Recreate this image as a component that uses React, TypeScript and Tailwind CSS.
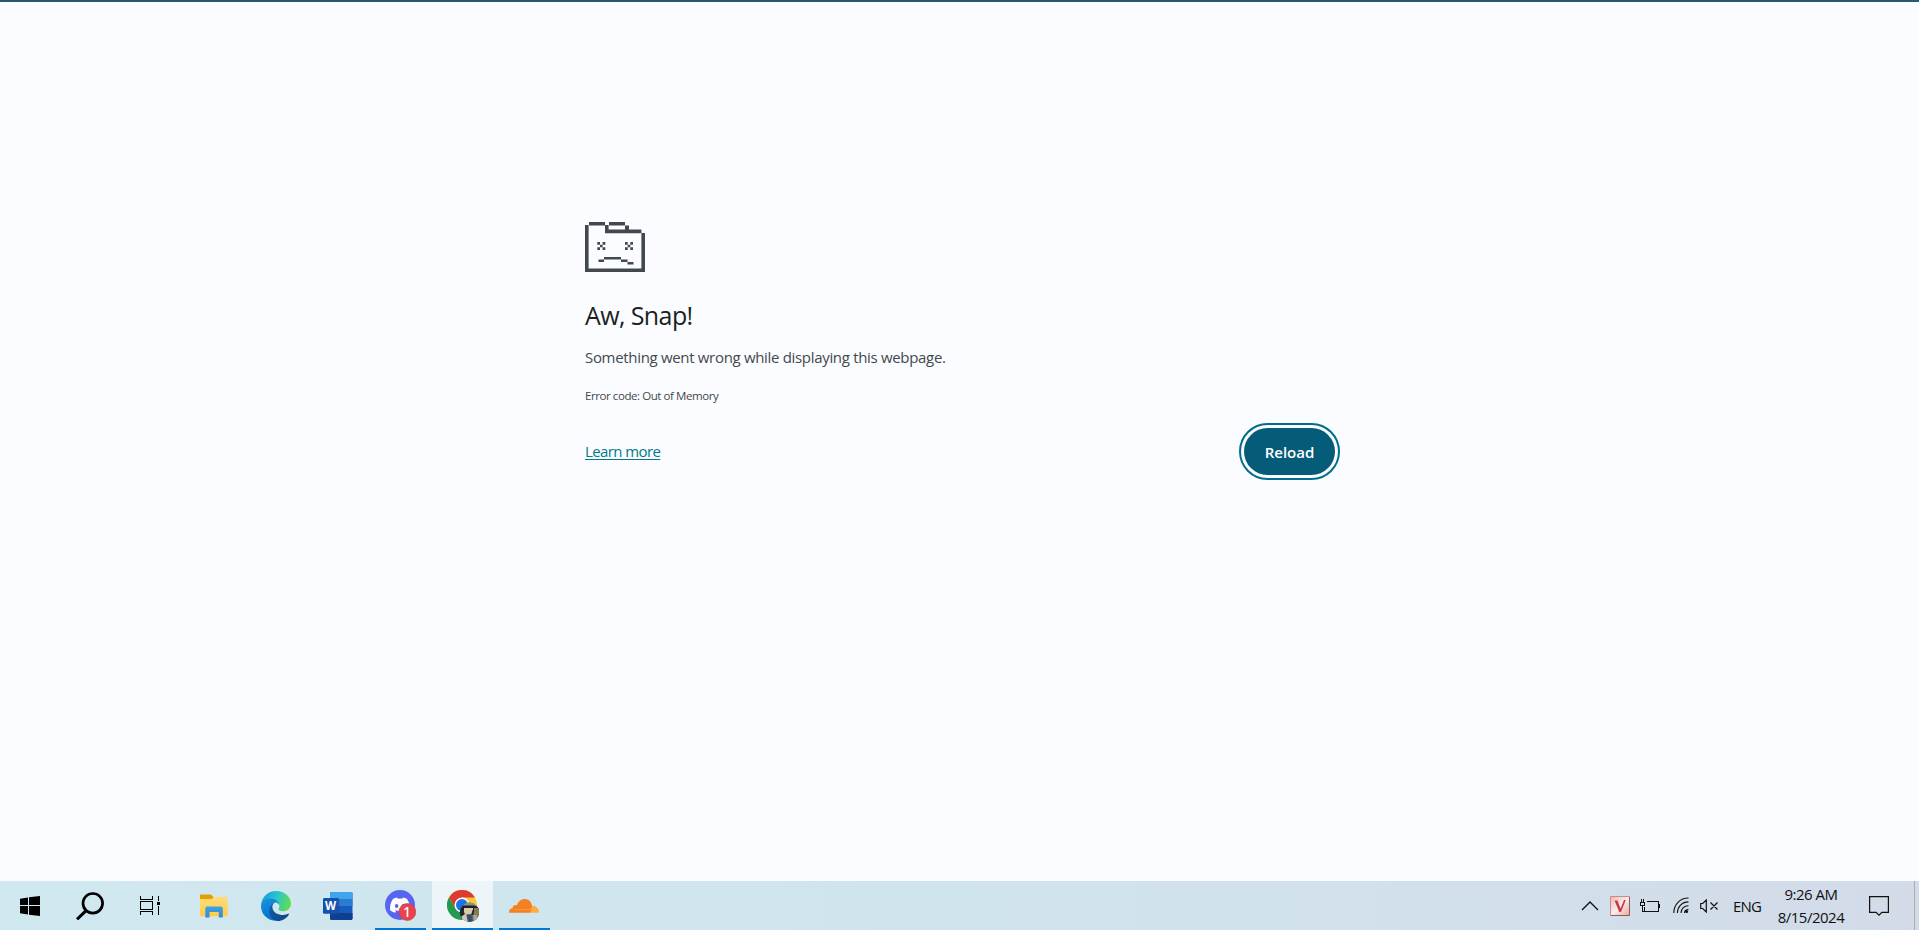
import type { ReactNode } from "react";

function SadFolder() {
  return (
    <svg width="60" height="50" viewBox="0 0 60 50" fill="#42494d" className="block">
      <path d="M4 0h16v3.4H4zM0 3h3.6v43.4H56.4V11.2H20V3h3.6v4.6H40V3.4h4v4.2H56.4v3.4H60V50H0zM24 0h16v3.4H24z" />
      <g>
        <path d="M12.3 20H15v2.7h2.6V20h2.7v2.7h-2.7v2.6h2.7V28h-2.7v-2.7H15V28h-2.7v-2.7H15v-2.6h-2.7z" />
        <path d="M40 20h2.7v2.7h2.6V20H48v2.7h-2.7v2.6H48V28h-2.7v-2.7h-2.6V28H40v-2.7h2.7v-2.6H40z" />
        <path d="M19 35h17v2.5H19zM13.5 37.5H19V40h-5.5zM36 37.5h6.5V40H36zM42.5 40h6v2.5h-6z" />
      </g>
    </svg>
  );
}

function Slot({ w, children, bar, active }: { w: string; children: ReactNode; bar?: string; active?: boolean }) {
  return (
    <div className={`${w} relative flex h-full shrink-0 items-center justify-center ${active ? "bg-[#edf5f9]" : ""}`}>
      {children}
      {bar && <span className={`absolute bottom-0 h-[2px] bg-[#0078d4] ${bar}`} />}
    </div>
  );
}

const StartIcon = () => (
  <svg width="20" height="20" viewBox="0 0 20 20">
    <path d="M0 2.8L8 1.5V9H0zM9 1.3L20 0v9H9zM0 10h8v8.5L0 17.2zM9 10h11v10L9 18.7z" />
  </svg>
);

const SearchIcon = () => (
  <svg width="28" height="28" viewBox="0 0 28 28" fill="none" stroke="#000" strokeWidth="2.7">
    <circle cx="16.8" cy="11.3" r="9.8" />
    <path d="M9.8 18.8L1 27.3" strokeWidth="3" />
  </svg>
);

const TaskViewIcon = () => (
  <svg width="20" height="19" viewBox="0 0 20 19" fill="none" stroke="#000" shapeRendering="crispEdges">
    <path d="M.5 0v3.5h12V0M.5 5.5h12v8H.5zM.5 19v-3.5h12V19M18.5 0v5M18.5 10v9" />
    <path d="M17 6h3v3h-3z" fill="#000" stroke="none" />
  </svg>
);

const ExplorerIcon = () => (
  <svg width="28" height="24" viewBox="0 0 28 24" className="ml-[2px]">
    <defs>
      <linearGradient id="folder" x1="0" y1="0" x2="0" y2="1">
        <stop stopColor="#ffdc78" /><stop offset="1" stopColor="#ffcc4a" />
      </linearGradient>
      <linearGradient id="clip" x1="0" y1="0" x2="0" y2="1">
        <stop stopColor="#45a0df" /><stop offset="1" stopColor="#2f8bd2" />
      </linearGradient>
    </defs>
    <path d="M0 1.3Q0 .5 1 .5h10l2.400 2.500H27v5H0z" fill="#dfa000" />
    <path d="M0 5h11.500L14 3h12.500q1.200 0 1.200 1.200v17q0 1-1.200 1H1q-1 0-1-1z" fill="url(#folder)" />
    <path d="M5.300 23.500v-9q0-2 2-2h13.500q2 0 2 2v9h-4V18H9.500v5.500z" fill="url(#clip)" />
  </svg>
);

const EdgeIcon = () => (
  <svg width="30" height="30" viewBox="0 0 30 30">
    <defs>
      <linearGradient id="edgeTop" x1="0" y1=".3" x2="1" y2=".5">
        <stop stopColor="#159bd9" /><stop offset=".5" stopColor="#2cc3d2" /><stop offset="1" stopColor="#62df48" />
      </linearGradient>
      <linearGradient id="edgeLeft" x1="0" y1="0" x2=".4" y2="1">
        <stop stopColor="#1695dc" /><stop offset="1" stopColor="#0870ca" />
      </linearGradient>
      <linearGradient id="edgeLow" x1="0" y1="0" x2="1" y2="1">
        <stop stopColor="#0f62ad" /><stop offset="1" stopColor="#0b4586" />
      </linearGradient>
    </defs>
    <path d="M.2 13.8C.8 6 7 0 15 0c9 0 15 6.300 15 12.600 0 4.600-3.500 7.600-7.400 7.600-3.800 0-5.200-1.300-5.200-2.200 0-.7 1-1 1-3.100 0-3.200-3.700-6.300-8.700-6.300-4.500 0-8 2.300-9.500 5.200z" fill="url(#edgeTop)" />
    <path d="M0 15C.3 10.600 4 7.600 9 7.600c5.200 0 9.400 3.200 9.400 7.200-.3-2-2.200-3.400-4.200-3.200-3.200.4-5.200 4.200-4.700 8.400.6 5 3.800 8.900 9 9.500C8.500 31.300 0 24.500 0 15z" fill="url(#edgeLeft)" />
    <path d="M14.200 11.600c-2.600.9-3 3.700-2.600 5.900 1 4.400 5.800 6.500 10.400 6.500 2.600 0 4.500-.9 5.300-1.200.5-.2.900.2.600.7C25.500 27.600 21.300 30 17 30c-5.500-1-9.100-5.400-8.600-10.600.3-4 2.500-7.300 5.800-7.800z" fill="url(#edgeLow)" />
  </svg>
);

const WordIcon = () => (
  <svg width="30" height="28" viewBox="0 0 30 28">
    <rect x="7" width="22.500" height="28" rx="1.400" fill="#185abd" />
    <path d="M8.400 0h19.700q1.400 0 1.400 1.400V7H7V1.400Q7 0 8.400 0z" fill="#41a5ee" />
    <path d="M7 7h22.500v7H7z" fill="#2b7cd3" />
    <path d="M7 21h22.500v5.600q0 1.400-1.400 1.400H8.400Q7 28 7 26.600z" fill="#103f91" />
    <path d="M7 6h8.500q1 0 1 1v16H7z" fill="#12458f" opacity=".45" />
    <rect y="6" width="15.300" height="15.800" rx="1.200" fill="#1552ad" />
    <text x="7.600" y="18" textAnchor="middle" fill="#fff" fontSize="11.500" fontWeight="700" fontFamily="Open Sans, sans-serif">W</text>
  </svg>
);

const DiscordIcon = () => (
  <svg width="31" height="31" viewBox="0 0 31 31">
    <circle cx="15" cy="15" r="15" fill="#5865f2" />
    <path transform="translate(5 5.200) scale(.83)" fill="#fff" d="M20.300 4.400A19.800 19.800 0 0 0 15.400 2.900L14.800 4.200a18 18 0 0 0-5.500 0L8.700 2.900A19.700 19.700 0 0 0 3.800 4.400C.5 9-.3 13.600.1 18.100a20 20 0 0 0 6 3l1.300-2L5.500 18.200L5.900 17.900c3.900 1.800 8.200 1.800 12.200 0L18.500 18.200L16.600 19.100l1.300 2a19.800 19.800 0 0 0 6-3C24.400 12.900 23.100 8.400 20.300 4.400zM8 15.300a2.200 2.400 0 1 1 0-4.800a2.200 2.400 0 1 1 0 4.800zM16 15.300a2.200 2.400 0 1 1 0-4.800a2.200 2.400 0 1 1 0 4.800z" />
    <circle cx="22.300" cy="22" r="8.500" fill="#e9444e" stroke="#c83a46" strokeWidth=".6" />
    <text x="22" y="27" textAnchor="middle" fill="#fff" fontSize="14" fontWeight="500" fontFamily="Noto Sans, sans-serif">1</text>
  </svg>
);

const ChromeIcon = () => (
  <svg width="32" height="32" viewBox="0 0 32 32">
    <defs><clipPath id="avatar"><circle cx="22.500" cy="22.300" r="9.700" /></clipPath></defs>
    <circle cx="15" cy="15" r="15" fill="#fcc934" />
    <path d="M2 7.500A15 15 0 0 1 28 7.500H15L8.500 18.800z" fill="#df3a2f" />
    <path d="M2 7.500L8.500 18.800 15 22.500h6.500L15 30A15 15 0 0 1 2 7.500z" fill="#219b50" />
    <circle cx="15" cy="15" r="7.500" fill="#fff" />
    <circle cx="15" cy="15" r="6" fill="#1a73e8" />
    <g clipPath="url(#avatar)">
      <path d="M12 12h20v20H12z" fill="#666a62" />
      <path d="M12 12h20v4H12z" fill="#8d9087" />
      <path d="M14 15.500h13l5 2v3H13z" fill="#182329" />
      <path d="M17 18h9v4.500l-3 2h-4l-2-2z" fill="#d9c9ad" />
      <path d="M27 18h5v8h-5z" fill="#8b7953" />
      <path d="M15 25l4-1 2 8h-6z" fill="#cfc7b7" />
      <path d="M20 24.500h4l2 8h-5z" fill="#35506b" />
      <path d="M26 25h4v7h-3z" fill="#a3aaa5" />
      <path d="M12 20h4.500l1 4-2 2h-4z" fill="#22282a" />
      <path d="M25.500 20h1.800l-1 5h-2z" fill="#252a2b" />
    </g>
  </svg>
);

const CloudIcon = () => (
  <svg width="30" height="14" viewBox="0 0 30 14">
    <path d="M21 13.700l.8-3.500 1.700-3.500c3.500-.3 6.500 3 6.500 7z" fill="#fbad41" />
    <path d="M0 13.700c-.2-2.500 1.400-4.400 3.600-4.500C3.500 6.600 6 5.400 8 6.300 9 2.500 12 0 15.700 0c3.500 0 6.300 2.400 7.100 5.700.5 2-.1 3.300-.7 5.300-.3 1-.5 1.800-.8 2.700z" fill="#f48120" />
    <path d="M5.500 10.500h15q1 0 1.600-1.500" fill="none" stroke="#f9ad65" strokeWidth=".5" />
  </svg>
);

function Tray() {
  return (
    <div className="flex h-full items-center">
      <svg width="18" height="10" viewBox="0 0 18 10" fill="none" stroke="#111" strokeWidth="1.300" className="mr-[11px]">
        <path d="M1 9l8-8 8 8" />
      </svg>
      <svg width="20" height="20" viewBox="0 0 20 20" className="mr-[10px]">
        <defs>
          <linearGradient id="vBox" x1="0" y1="0" x2="1" y2="1">
            <stop stopColor="#eab5b0" /><stop offset=".5" stopColor="#f8efed" /><stop offset="1" stopColor="#eba49d" />
          </linearGradient>
        </defs>
        <path d="M.5.5h19v19H.5z" fill="url(#vBox)" stroke="#d08a83" />
        <path d="M1 19.500h18.500V1" fill="none" stroke="#8e5b57" />
        <path d="M4.500 4.500h3l3 8 3.500-8.500h1.800l-4.800 12H9.300z" fill="#cf3a42" />
      </svg>
      <svg width="20" height="14" viewBox="0 0 20 14" fill="none" stroke="#111" className="mr-[13px]" shapeRendering="crispEdges">
        <path d="M7 2.500h11.500v10h-14M19.500 5v4M1.500 0v3M3.500 0v3M0 3.500h5M.5 3.500v3M4.500 3.500v3M1 6.500h3M2.500 7v5.500h2M4.500 8v4" />
      </svg>
      <svg width="16" height="17" viewBox="0 0 16 17" fill="none" stroke="#111" strokeWidth="1.100" className="mr-[11px]">
        <path d="M.8 16C.8 7.500 7 1 15.500 1M4.400 16C4.400 9.800 9 4.900 15.500 4.900M8 16c0-4.200 3-7.300 7.500-7.300M11.500 16c0-2 1.500-3.400 4-3.500" />
        <circle cx="13.600" cy="14.500" r="1.500" fill="#111" stroke="none" />
      </svg>
      <svg width="19" height="14" viewBox="0 0 19 14" fill="none" stroke="#111" strokeWidth="1.200" className="mr-[14px]">
        <path d="M.7 4.500h2L6.300 1v12L2.700 9.500h-2zM10.500 3.500l7 7M17.500 3.500l-7 7" />
      </svg>
      <span className="w-[29px] whitespace-nowrap text-[15px] leading-[20px] tracking-[-0.8px]">ENG</span>
      <div className="ml-[12px] flex w-[74px] flex-col items-center whitespace-nowrap text-[15px] leading-[23px] tracking-[-0.5px]">
        <span>9:26 AM</span>
        <span>8/15/2024</span>
      </div>
      <svg width="20" height="20" viewBox="0 0 20 20" fill="none" stroke="#111" strokeWidth="1.200" className="ml-[21px]">
        <path d="M.6.6h18.800v15.800h-6.500L10 19.200 7.100 16.400H.6z" />
      </svg>
      <div className="ml-[25px] h-full w-[5px] border-l border-[#a5afbb]" />
    </div>
  );
}

export default function App() {
  return (
    <div className="flex h-[930px] w-[1919px] flex-col overflow-hidden border-t-2 border-[#2b596c] bg-[#fbfcff] font-['Open_Sans','Noto_Sans',sans-serif]">
      <main className="flex-1 pl-[585px] pt-[220px]">
        <div className="w-[750px]">
          <SadFolder />
          <h1 className="mt-[25px] whitespace-nowrap text-[25px] leading-[36px] tracking-[-0.6px] text-[#1b1f21]">Aw, Snap!</h1>
          <p className="mt-[12px] whitespace-nowrap text-[15px] leading-[24px] tracking-[-0.32px] text-[#42494d]">Something went wrong while displaying this webpage.</p>
          <p className="mt-[17px] whitespace-nowrap text-[11.500px] leading-[20px] tracking-[-0.43px] text-[#42494d]">Error code: Out of Memory</p>
          <div className="mt-[22px] flex h-[47px] items-center justify-between">
            <a className="mb-[2px] whitespace-nowrap text-[15px] leading-[20px] tracking-[-0.6px] text-[#007b83] underline decoration-1 underline-offset-2">Learn more</a>
            <button className="h-[47px] w-[91px] rounded-full bg-[#045c78] pt-[2px] text-[15px] font-semibold text-white outline-[2.5px] outline-offset-3 outline-[#006e8b]">Reload</button>
          </div>
        </div>
      </main>
      <footer className="flex h-[49px] shrink-0 justify-between bg-linear-to-r from-[#d0e8f0] via-[#d0e4ee] to-[#d3dbe9] text-[#111]">
        <div className="flex h-full">
          <Slot w="w-[60px]"><StartIcon /></Slot>
          <Slot w="w-[60px]"><SearchIcon /></Slot>
          <Slot w="w-[60px]"><TaskViewIcon /></Slot>
          <Slot w="w-[66px]"><ExplorerIcon /></Slot>
          <Slot w="w-[60px]"><EdgeIcon /></Slot>
          <Slot w="w-[63px]"><WordIcon /></Slot>
          <Slot w="w-[63px]" bar="left-[6px] w-[51px]"><DiscordIcon /></Slot>
          <Slot w="w-[61px]" bar="left-0 w-[61px]" active><ChromeIcon /></Slot>
          <Slot w="w-[62px]" bar="left-[6px] w-[51px]"><CloudIcon /></Slot>
        </div>
        <Tray />
      </footer>
    </div>
  );
}
